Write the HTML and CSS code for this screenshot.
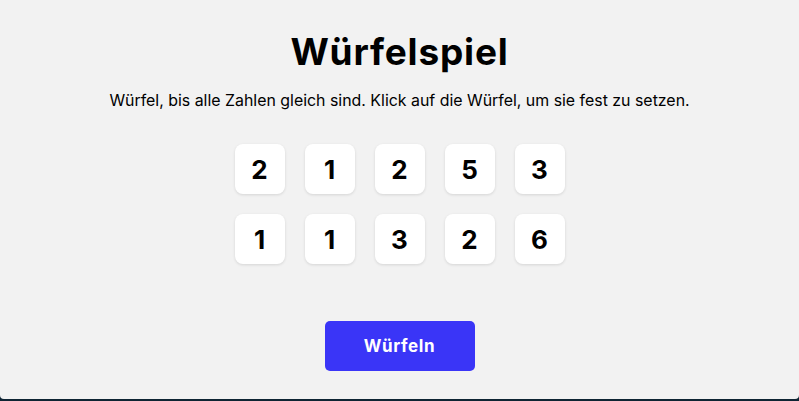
FILE: index.html
```html
<!DOCTYPE html>
<html lang="de">
<head>
<meta charset="utf-8">
<link rel="stylesheet" href="styles.css">
</head>
<body>
<main class="page">
  <h1 class="title">Würfelspiel</h1>
  <p class="intro">Würfel, bis alle Zahlen gleich sind. Klick auf die Würfel, um sie fest zu setzen.</p>
  <div class="board">
    <div class="row">
      <div class="die">2</div><div class="die">1</div><div class="die">2</div><div class="die">5</div><div class="die">3</div>
    </div>
    <div class="row">
      <div class="die">1</div><div class="die">1</div><div class="die">3</div><div class="die">2</div><div class="die">6</div>
    </div>
  </div>
  <button class="roll">Würfeln</button>
</main>
</body>
</html>
```
FILE: styles.css
```css
html {
  margin: 0;
  height: 100%;
  background: #0e2433;
}
body {
  margin: 0;
  height: 399px;
  background: #f2f2f2;
  border-radius: 0 0 4px 4px;
  font-family: Inter, "Noto Sans", sans-serif;
  color: #000;
  overflow: hidden;
}
.page {
  display: flex;
  flex-direction: column;
  align-items: center;
  padding-top: 28px;
}
.title {
  margin: 0;
  font-size: 37px;
  font-weight: 700;
  line-height: 48px;
  letter-spacing: 0.8px;
}
.intro {
  margin: 15px 0 0;
  font-size: 15.9px;
  line-height: 20px;
}
.board {
  display: flex;
  flex-direction: column;
  gap: 20px;
  margin-top: 33px;
}
.row {
  display: flex;
  gap: 20px;
}
.die {
  width: 50px;
  height: 50px;
  background: #fff;
  border-radius: 8px;
  box-shadow: 0 1px 3px rgba(0, 0, 0, 0.12);
  display: flex;
  align-items: center;
  justify-content: center;
  font-size: 26px;
  font-weight: 700;
}
.roll {
  margin-top: 57px;
  width: 150px;
  height: 50px;
  border: 0;
  border-radius: 5px;
  background: #3a35f7;
  color: #fff;
  font-family: Inter, "Noto Sans", sans-serif;
  font-size: 17px;
  font-weight: 700;
  letter-spacing: 0.6px;
}
```
